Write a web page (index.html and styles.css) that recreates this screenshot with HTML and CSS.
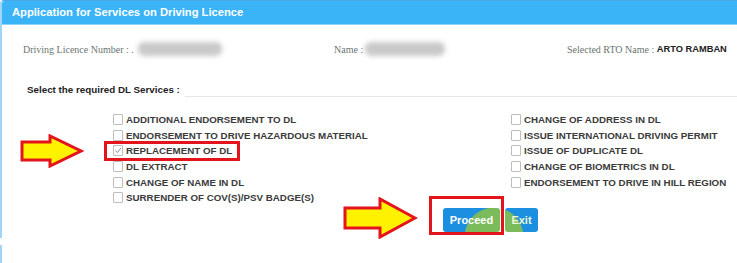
FILE: index.html
```html
<!DOCTYPE html>
<html>
<head>
<meta charset="utf-8">
<link rel="stylesheet" href="styles.css">
</head>
<body>
<div class="panel">
  <div class="panel-head">Application for Services on Driving Licence</div>
  <div class="info">
    <div class="info-item">Driving Licence Number : .<span class="blur b1"></span></div>
    <div class="info-item">Name : <span class="blur b2"></span></div>
    <div class="info-item">Selected RTO Name :&nbsp;<b class="rto">ARTO RAMBAN</b></div>
  </div>
  <div class="section-title"><span>Select the required DL Services :</span><div class="rule"></div></div>
  <div class="services">
    <svg class="arrow arrow-left" width="64" height="34" viewBox="0 0 64 34"><path d="M2 8 H30 V2 L61 17 L30 32 V26 H2 Z" fill="#fff200" stroke="#e3141b" stroke-width="3" stroke-linejoin="miter"/></svg>
    <div class="col col-left">
      <label class="svc"><span class="cb"></span>ADDITIONAL ENDORSEMENT TO DL</label>
      <label class="svc"><span class="cb"></span>ENDORSEMENT TO DRIVE HAZARDOUS MATERIAL</label>
      <label class="svc marked"><span class="cb checked"><svg width="9" height="9" viewBox="0 0 9 9"><path d="M1.5 4.5 L3.8 6.8 L7.8 1.8" fill="none" stroke="#888" stroke-width="1.1"/></svg></span>REPLACEMENT OF DL</label>
      <label class="svc"><span class="cb"></span>DL EXTRACT</label>
      <label class="svc"><span class="cb"></span>CHANGE OF NAME IN DL</label>
      <label class="svc"><span class="cb"></span>SURRENDER OF COV(S)/PSV BADGE(S)</label>
    </div>
    <div class="col col-right">
      <label class="svc"><span class="cb"></span>CHANGE OF ADDRESS IN DL</label>
      <label class="svc"><span class="cb"></span>ISSUE INTERNATIONAL DRIVING PERMIT</label>
      <label class="svc"><span class="cb"></span>ISSUE OF DUPLICATE DL</label>
      <label class="svc"><span class="cb"></span>CHANGE OF BIOMETRICS IN DL</label>
      <label class="svc"><span class="cb"></span>ENDORSEMENT TO DRIVE IN HILL REGION</label>
    </div>
  </div>
  <div class="actions">
    <svg class="arrow arrow-btn" width="75" height="42" viewBox="0 0 75 42"><path d="M2 11 H37 V2 L72 21 L37 40 V31 H2 Z" fill="#fff200" stroke="#e3141b" stroke-width="3" stroke-linejoin="miter"/></svg>
    <div class="btn-box"><button class="btn proceed">Proceed</button></div>
    <button class="btn exit">Exit</button>
  </div>
</div>
<div class="panel2"></div>
</body>
</html>
```
FILE: styles.css
```css
html, body { margin: 0; padding: 0; background: #fff; }
body { width: 737px; height: 263px; overflow: hidden; font-family: "Liberation Sans", Arial, sans-serif; }

.panel {
  position: relative;
  height: 238px;
  border-left: 2px solid #9fd6f5;
  border-top: 1px solid #4aa8e0;
  border-radius: 4px 0 0 0;
  box-sizing: border-box;
}
.panel-head {
  height: 23px;
  background: #3ab4f7;
  color: #fff;
  font-weight: bold;
  font-size: 11.2px;
  line-height: 22px;
  padding-left: 10px;
  border-bottom: 1px solid #8dd2f7;
  border-radius: 3px 0 0 0;
}
.info {
  display: grid;
  grid-template-columns: 311px 233px auto;
  padding: 16px 0 0 21px;
  height: 16px;
  align-items: center;
  font-family: "Liberation Serif", "Times New Roman", serif;
  font-size: 10px;
  color: #6a7572;
}
.info-item { display: flex; align-items: center; white-space: nowrap; }
.blur {
  display: inline-block;
  height: 14px;
  background: #c9c9c9;
  border-radius: 6px;
  filter: blur(2.5px);
}
.b1 { width: 84px; margin-left: 4px; }
.b2 { width: 80px; margin-left: 2px; }
.rto {
  font-family: "Liberation Sans", Arial, sans-serif;
  font-weight: bold;
  font-size: 9.3px;
  color: #222;
}
.section-title {
  display: flex;
  align-items: flex-end;
  padding: 26px 0 0 25px;
  font-size: 9.8px;
  font-weight: bold;
  color: #222;
}
.section-title span { line-height: 14px; }
.rule { flex: 1; border-bottom: 1px solid #e6e6e6; margin-left: 5px; margin-bottom: 0; }

.services {
  position: relative;
  display: flex;
  padding: 15px 0 0 111px;
  height: 94px;
}
.col { display: flex; flex-direction: column; }
.col-left { width: 398px; }
.svc {
  display: flex;
  align-items: center;
  height: 15.6px;
  flex: none;
  font-size: 9.75px;
  font-weight: bold;
  color: #3a3a3a;
  white-space: nowrap;
}
.cb {
  width: 8px;
  height: 9px;
  border: 1px solid #bdbdbd;
  border-radius: 1px;
  margin-right: 3px;
  background: #fff;
  display: inline-flex;
  align-items: center;
  justify-content: center;
}
.cb svg { display: block; }
.svc.marked {
  outline: 3px solid #e3141b;
  outline-offset: -1px;
  margin-left: -7px;
  padding-left: 7px;
  width: 125px;
}
.arrow { position: absolute; }
.arrow-left { left: 18px; top: 37px; }

.actions {
  position: relative;
  display: flex;
  align-items: flex-start;
  padding: 0 0 0 427px;
  margin-top: -10px;
}
.arrow-btn { left: 341px; top: 1px; }
.btn-box {
  border: 3px solid #e3141b;
  width: 69px;
  height: 33px;
  display: flex;
  align-items: flex-end;
  justify-content: flex-end;
}
.btn {
  border: none;
  color: #fff;
  font-family: "Liberation Sans", Arial, sans-serif;
  font-weight: bold;
  font-size: 11px;
  height: 24px;
  border-radius: 3px;
  padding: 0;
  margin: 0;
}
.proceed {
  width: 57px;
  margin: 0 1px 0 0;
  background: radial-gradient(circle 30px at 51px 29px, #7bbb5c 96%, rgba(123,187,92,0) 100%), #1c8fe1;
}
.exit {
  width: 33px;
  margin: 12px 0 0 1px;
  background: radial-gradient(circle 30px at -11px 29px, #7bbb5c 96%, rgba(123,187,92,0) 100%), #1c8fe1;
  color: #eef8d8;
}
.panel2 {
  margin-top: 7px;
  height: 20px;
  border-left: 2px solid #9fd6f5;
}
```
